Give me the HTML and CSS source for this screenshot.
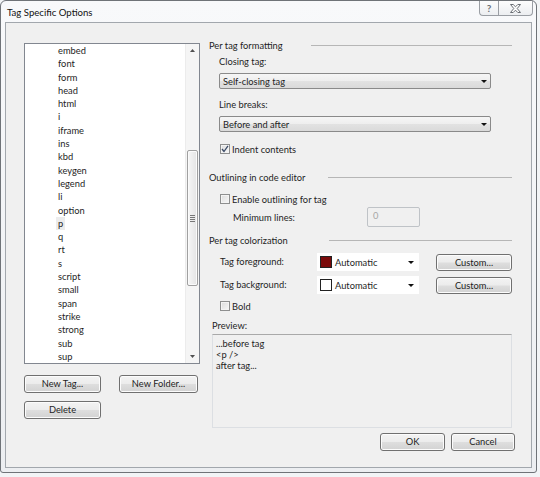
FILE: index.html
```html
<!DOCTYPE html>
<html>
<head>
<meta charset="utf-8">
<title>Tag Specific Options</title>
<link rel="stylesheet" href="styles.css">
</head>
<body>
<div class="window">
  <div class="titlebar">
    <span class="title">Tag Specific Options</span>
    <div class="tbtns">
      <div class="tbtn help"><span class="q">?</span></div>
      <div class="tbtn close">
        <svg width="11" height="9" viewBox="0 0 11 9"><path d="M0.5 0.5 H3.2 L5.5 2.8 L7.8 0.5 H10.5 L7.2 4.5 L10.5 8.5 H7.8 L5.5 6.2 L3.2 8.5 H0.5 L3.8 4.5 Z" fill="#fff" stroke="#6a6e74" stroke-width="1"/></svg>
      </div>
    </div>
  </div>
  <div class="client">
    <div class="main">
      <div class="left">
        <div class="listbox">
          <ul class="items">
            <li>embed</li><li>font</li><li>form</li><li>head</li><li>html</li><li>i</li>
            <li>iframe</li><li>ins</li><li>kbd</li><li>keygen</li><li>legend</li><li>li</li>
            <li>option</li><li><span class="sel">p</span></li><li>q</li><li>rt</li><li>s</li><li>script</li>
            <li>small</li><li>span</li><li>strike</li><li>strong</li><li>sub</li><li>sup</li>
          </ul>
          <div class="vscroll">
            <div class="sarrow"><svg width="5" height="3" viewBox="0 0 5 3"><path d="M0 3 L2.5 0 L5 3 Z" fill="#505050"/></svg></div>
            <div class="sgap"></div>
            <div class="thumb"><div class="grip"><i></i><i></i><i></i><i></i></div></div>
            <div class="sfill"></div>
            <div class="sarrow"><svg width="5" height="3" viewBox="0 0 5 3"><path d="M0 0 L5 0 L2.5 3 Z" fill="#505050"/></svg></div>
          </div>
        </div>
        <div class="btnrow">
          <div class="btn w-tag">New Tag...</div>
          <div class="btn w-folder">New Folder...</div>
        </div>
        <div class="btnrow second">
          <div class="btn w-tag">Delete</div>
        </div>
      </div>
      <div class="right">
        <div class="hdr"><span class="ht ht-a">Per tag formatting</span><span class="rule"></span></div>
        <div class="lbl r-closing">Closing tag:</div>
        <div class="combo r-combo1"><span class="ctext">Self-closing tag</span><svg class="arrow" width="6" height="3" viewBox="0 0 6 3"><path d="M0 0 L6 0 L3 3 Z" fill="#111"/></svg></div>
        <div class="lbl r-lines">Line breaks:</div>
        <div class="combo r-combo2"><span class="ctext">Before and after</span><svg class="arrow" width="6" height="3" viewBox="0 0 6 3"><path d="M0 0 L6 0 L3 3 Z" fill="#111"/></svg></div>
        <div class="check r-indent"><span class="box"><svg width="8" height="8" viewBox="0 0 8 8"><path d="M1 4 L3 6.5 L7 0.8" fill="none" stroke="#3a4a66" stroke-width="1.3"/></svg></span><span>Indent contents</span></div>
        <div class="hdr r-h2"><span class="ht ht-b">Outlining in code editor</span><span class="rule"></span></div>
        <div class="check r-enable"><span class="box"></span><span>Enable outlining for tag</span></div>
        <div class="minrow">
          <span class="minlbl">Minimum lines:</span>
          <span class="numbox">0</span>
        </div>
        <div class="hdr r-h3"><span class="ht ht-c">Per tag colorization</span><span class="rule"></span></div>
        <div class="colorrow r-fg">
          <span class="clbl">Tag foreground:</span>
          <span class="ccombo"><span class="swatch fg"></span><span class="ctext2">Automatic</span><svg class="arrow" width="6" height="3" viewBox="0 0 6 3"><path d="M0 0 L6 0 L3 3 Z" fill="#111"/></svg></span>
          <span class="btn w-custom">Custom...</span>
        </div>
        <div class="colorrow r-bg">
          <span class="clbl">Tag background:</span>
          <span class="ccombo"><span class="swatch bg"></span><span class="ctext2">Automatic</span><svg class="arrow" width="6" height="3" viewBox="0 0 6 3"><path d="M0 0 L6 0 L3 3 Z" fill="#111"/></svg></span>
          <span class="btn w-custom">Custom...</span>
        </div>
        <div class="check r-bold"><span class="box"></span><span>Bold</span></div>
        <div class="plbl">Preview:</div>
        <div class="preview">
          <div>...before tag</div>
          <div>&lt;p /&gt;</div>
          <div>after tag...</div>
        </div>
      </div>
    </div>
    <div class="footer">
      <div class="btn w-ok">OK</div>
      <div class="btn w-cancel">Cancel</div>
    </div>
  </div>
</div>
</body>
</html>
```

FILE: styles.css
```css
* { box-sizing: border-box; }
html, body { margin: 0; padding: 0; }
body {
  width: 540px;
  height: 477px;
  overflow: hidden;
  background: #f2f4f6;
  font-family: Lato, "Open Sans", sans-serif;
  font-size: 9.3px;
  color: #1e1e1e;
}
.window {
  width: 537px;
  height: 473px;
  border: 1px solid #6f7378;
  border-radius: 6px 6px 3px 3px;
  background: linear-gradient(#f8f9fb, #eceef1);
  display: flex;
  flex-direction: column;
}
.titlebar {
  height: 21px;
  flex: none;
  display: flex;
  align-items: flex-start;
}
.title {
  margin-left: 6px;
  margin-top: 6px;
  line-height: 12px;
  font-size: 9.6px;
  color: #111;
}
.tbtns {
  margin-left: auto;
  margin-right: 3px;
  display: flex;
}
.tbtn {
  height: 15px;
  border: 1px solid #9a9ea4;
  border-top: none;
  background: linear-gradient(#fdfdfd, #eceef1);
  display: flex;
  align-items: center;
  justify-content: center;
}
.help {
  width: 19px;
  border-right: none;
  border-radius: 0 0 0 4px;
}
.help .q {
  font-size: 10px;
  font-weight: bold;
  color: #6a6e74;
  line-height: 10px;
}
.close {
  width: 35px;
  border-radius: 0 0 4px 0;
}
.client {
  flex: 1;
  margin: 0 4px 4px 4px;
  border: 1px solid #a2a7ad;
  background: #f0f0f0;
  display: flex;
  flex-direction: column;
}
.main {
  display: flex;
  padding: 17px 0 0 18px;
}
.left {
  width: 176px;
  flex: none;
  margin-top: 3px;
}
.listbox {
  height: 321px;
  border: 1px solid #828790;
  background: #fff;
  display: flex;
}
.items {
  list-style: none;
  margin: 0;
  padding: 0 0 0 33px;
  flex: 1;
}
.items li {
  height: 13.3px;
  line-height: 13.3px;
}
.sel {
  background: #ececec;
  padding: 1px 2px;
  margin-left: -2px;
}
.vscroll {
  width: 14px;
  flex: none;
  background: #f5f5f5;
  border-left: 1px solid #ececec;
  display: flex;
  flex-direction: column;
}
.sarrow {
  height: 13px;
  display: flex;
  align-items: center;
  justify-content: center;
}
.sgap { height: 93px; }
.sfill { flex: 1; }
.thumb {
  height: 136px;
  width: 11px;
  margin-left: 1px;
  border: 1px solid #a0a0a0;
  border-radius: 2px;
  background: linear-gradient(90deg, #f6f6f6, #e4e4e4);
  box-shadow: inset 0 0 0 1px #fbfbfb;
  display: flex;
  align-items: center;
  justify-content: center;
}
.grip {
  display: flex;
  flex-direction: column;
  gap: 1px;
}
.grip i {
  display: block;
  width: 5px;
  height: 1px;
  background: #777;
}
.btnrow {
  display: flex;
  gap: 18px;
  margin-top: 11px;
}
.btnrow.second { margin-top: 8px; }
.btn {
  height: 18px;
  border: 1px solid #707070;
  border-radius: 3px;
  background: linear-gradient(#f3f3f3 0%, #ececec 48%, #dedede 52%, #d2d2d2 100%);
  box-shadow: inset 0 0 0 1px #fcfcfc;
  display: flex;
  align-items: center;
  justify-content: center;
  line-height: 12px;
}
.w-tag { width: 77px; }
.w-folder { width: 79px; }
.w-custom { width: 76px; height: 17px; margin-left: 17px; margin-top: 1px; }
.w-ok { width: 65px; }
.w-cancel { width: 64px; }
.right {
  margin-left: 9px;
  width: 303px;
  display: flex;
  flex-direction: column;
}
.hdr {
  height: 12px;
  line-height: 12px;
  display: flex;
  align-items: center;
  flex: none;
}
.ht { flex: none; }
.ht-a { width: 102px; }
.ht-b { width: 119px; }
.ht-c { width: 120px; }
.rule {
  flex: 1;
  height: 1px;
  background: #b6b6b6;
  margin-top: -1px;
}
.lbl {
  margin-left: 10px;
  height: 12px;
  line-height: 12px;
}
.r-closing { margin-top: 4px; }
.r-lines { margin-top: 10px; }
.combo {
  margin-left: 10px;
  width: 272px;
  height: 16px;
  border: 1px solid #8a8a8a;
  border-radius: 2px;
  background: linear-gradient(#f6f6f6 0%, #eeeeee 50%, #e2e2e2 52%, #dadada 100%);
  display: flex;
  align-items: center;
  padding: 0 3px 0 3px;
}
.r-combo1, .r-combo2 { margin-top: 5px; }
.ctext { flex: 1; }
.arrow { flex: none; }
.check {
  display: flex;
  align-items: center;
  height: 12px;
  margin-left: 11px;
  gap: 2px;
}
.box {
  width: 10px;
  height: 10px;
  border: 1px solid #8e8f8f;
  background: linear-gradient(135deg, #dcdcdc, #f8f8f8);
  box-shadow: inset 0 0 0 1px #f4f4f4;
  display: flex;
  align-items: center;
  justify-content: center;
}
.r-indent { margin-top: 11px; }
.r-h2 { margin-top: 17px; }
.r-enable { margin-top: 9px; }
.minrow {
  margin-top: 2px;
  height: 20px;
  display: flex;
  align-items: center;
}
.minlbl {
  margin-left: 24px;
  width: 134px;
}
.numbox {
  width: 53px;
  height: 20px;
  border: 1px solid #bfc3c7;
  border-radius: 2px;
  background: #f0f0f0;
  color: #a6a6a6;
  padding: 2px 0 0 5px;
  line-height: 12px;
}
.r-h3 { margin-top: 8px; }
.colorrow {
  display: flex;
  align-items: flex-start;
  height: 18px;
}
.r-fg { margin-top: 6px; }
.r-bg { margin-top: 5px; }
.clbl {
  margin-left: 11px;
  width: 97px;
  line-height: 18px;
}
.ccombo {
  width: 102px;
  height: 18px;
  background: #fff;
  display: flex;
  align-items: center;
  padding: 0 5px 0 3px;
}
.swatch {
  width: 12px;
  height: 12px;
  border: 1px solid #222;
  flex: none;
}
.swatch.fg { background: #7a0a0a; }
.swatch.bg { background: #fff; }
.ctext2 { flex: 1; margin-left: 3px; }
.r-bold { margin-top: 6px; }
.plbl {
  margin-top: 8px;
  margin-left: 3px;
  height: 12px;
  line-height: 12px;
}
.preview {
  margin-top: 2px;
  margin-left: 3px;
  width: 300px;
  height: 94px;
  border: 1px solid #dcdfe3;
  border-top-color: #a9a9a9;
  background: #f0f0f0;
  padding: 3px 0 0 3px;
  line-height: 11px;
}
.footer {
  margin-top: 5px;
  display: flex;
  justify-content: flex-end;
  gap: 6px;
  padding-right: 16px;
}
```
